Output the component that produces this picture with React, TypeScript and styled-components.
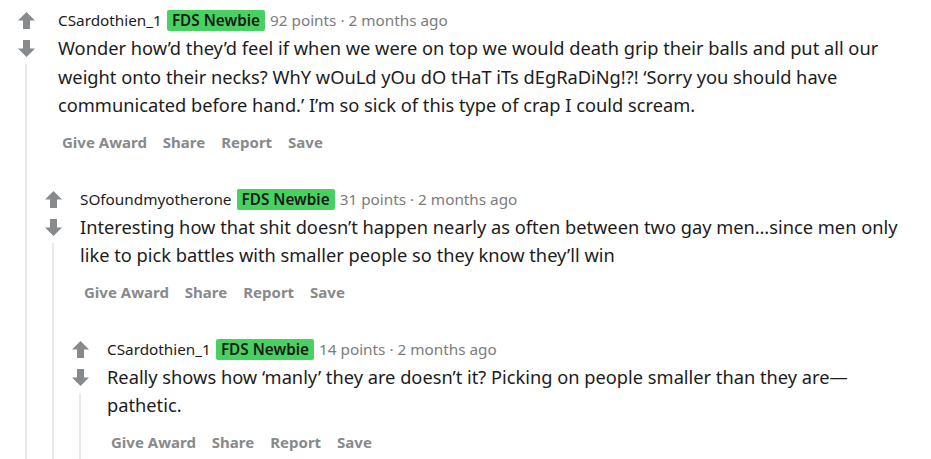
import React from 'react';
import styled, { createGlobalStyle } from 'styled-components';

const GlobalStyle = createGlobalStyle`
	html, body {
		margin: 0;
		padding: 0;
		background: #ffffff;
	}
	body {
		font-family: 'Noto Sans', 'Liberation Sans', Arial, sans-serif;
		color: #1c1c1c;
	}
`;

const LINE = '#e8e9ea';

const Page = styled.div`
	padding: 10px 26px 0 17px;
	overflow: hidden;
	height: 459px;
	box-sizing: border-box;
`;

const Row = styled.div`
	display: flex;
	align-items: stretch;
`;

const Guide = styled.div`
	width: 27px;
	flex-shrink: 0;
	background: linear-gradient(${LINE}, ${LINE}) no-repeat 8px 0 / 2px 100%;
`;

const VoteCol = styled.div`
	width: 18px;
	flex-shrink: 0;
	display: flex;
	flex-direction: column;
	align-items: center;
`;

const VoteButton = styled.button<{ $down?: boolean }>`
	border: 0;
	padding: 0;
	background: none;
	width: 17px;
	height: 17px;
	margin-top: ${(p) => (p.$down ? '11px' : '2px')};
	display: flex;
	color: #878a8c;
	cursor: pointer;
`;

const ThreadLine = styled.div`
	flex: 1;
	width: 2px;
	margin-top: 7px;
	background: ${LINE};
`;

const Content = styled.div<{ $top?: boolean }>`
	flex: 1;
	min-width: 0;
	padding-left: ${(p) => (p.$top ? '23px' : '18px')};
	padding-bottom: 31px;
`;

const Header = styled.div`
	display: flex;
	align-items: center;
	gap: 5px;
	min-height: 21px;
	font-size: 15.3px;
	line-height: 21px;
`;

const Author = styled.span`
	color: #1c1c1c;
`;

const Flair = styled.span`
	background: #46d160;
	color: #1a1a1b;
	font-weight: 600;
	font-size: 15.3px;
	line-height: 21px;
	padding: 0 5px;
	border-radius: 2px;
`;

const Meta = styled.span`
	color: #7c7c7c;
`;

const Text = styled.p`
	margin: 3px 0 0;
	font-size: 18.25px;
	line-height: 28.5px;
	color: #1c1c1c;
`;

const Actions = styled.div`
	display: flex;
	align-items: center;
	gap: 8px;
	height: 32px;
	margin-top: 6px;
`;

const ActionButton = styled.button`
	border: 0;
	background: none;
	padding: 0 4px;
	font-family: 'Noto Sans', 'Liberation Sans', Arial, sans-serif;
	font-weight: 700;
	font-size: 15px;
	color: #878a8c;
	cursor: pointer;
`;

type Comment = {
	depth: number;
	author: string;
	points: number;
	body: string;
};

const comments: Comment[] = [
	{
		depth: 0,
		author: 'CSardothien_1',
		points: 92,
		body: 'Wonder how’d they’d feel if when we were on top we would death grip their balls and put all our weight onto their necks? WhY wOuLd yOu dO tHaT iTs dEgRaDiNg!?! ‘Sorry you should have communicated before hand.’ I’m so sick of this type of crap I could scream.'
	},
	{
		depth: 1,
		author: 'SOfoundmyotherone',
		points: 31,
		body: 'Interesting how that shit doesn’t happen nearly as often between two gay men…since men only like to pick battles with smaller people so they know they’ll win'
	},
	{
		depth: 2,
		author: 'CSardothien_1',
		points: 14,
		body: 'Really shows how ‘manly’ they are doesn’t it? Picking on people smaller than they are—pathetic.'
	}
];

const Arrow = ({ down }: { down?: boolean }) => (
	<svg width="17" height="17" viewBox="0 0 17 17" style={down ? { transform: 'rotate(180deg)' } : undefined}>
		<polygon points="8.5,0 17,8.5 12,8.5 12,17 5,17 5,8.5 0,8.5" fill="currentColor" />
	</svg>
);

const CommentRow = ({ c }: { c: Comment }) => (
	<Row>
		{Array.from({ length: c.depth }).map((_, i) => (
			<Guide key={i} />
		))}
		<VoteCol>
			<VoteButton aria-label="upvote">
				<Arrow />
			</VoteButton>
			<VoteButton $down aria-label="downvote">
				<Arrow down />
			</VoteButton>
			<ThreadLine />
		</VoteCol>
		<Content $top={c.depth === 0}>
			<Header>
				<Author>{c.author}</Author>
				<Flair>FDS Newbie</Flair>
				<Meta>{c.points} points · 2 months ago</Meta>
			</Header>
			<Text>{c.body}</Text>
			<Actions>
				<ActionButton>Give Award</ActionButton>
				<ActionButton>Share</ActionButton>
				<ActionButton>Report</ActionButton>
				<ActionButton>Save</ActionButton>
			</Actions>
		</Content>
	</Row>
);

export default function App() {
	return (
		<>
			<GlobalStyle />
			<Page>
				{comments.map((c, i) => (
					<CommentRow key={i} c={c} />
				))}
			</Page>
		</>
	);
}
